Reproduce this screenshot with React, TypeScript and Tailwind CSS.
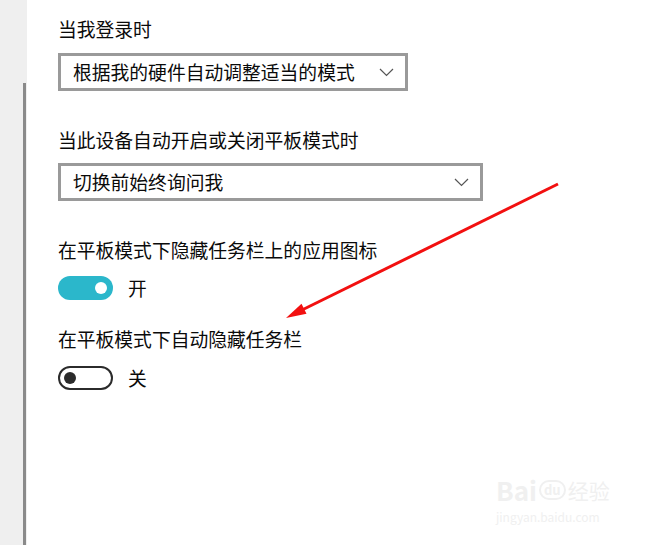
const FONT = { fontFamily: '"Microsoft YaHei", "Noto Sans CJK SC", "Noto Sans", sans-serif' };

function Chevron() {
  return (
    <svg width="15" height="9" viewBox="0 0 15 9" className="shrink-0">
      <path d="M1 1 L7.5 7.5 L14 1" fill="none" stroke="#555" strokeWidth="1.2" />
    </svg>
  );
}

function Select({ value, width }: { value: string; width: string }) {
  return (
    <div
      className={`flex h-[38px] items-center justify-between border-[3px] border-[#9a9a9a] bg-white pl-[12px] pr-[11px] ${width}`}
    >
      <span className="text-[18.8px] leading-none text-[#0a0a0a]">{value}</span>
      <Chevron />
    </div>
  );
}

function Toggle({ on, label }: { on: boolean; label: string }) {
  return (
    <div className="flex items-center gap-[15px]">
      {on ? (
        <div className="flex h-[24px] w-[55px] items-center justify-end rounded-full bg-[#2bb7cb] pr-[6px]">
          <div className="h-[12px] w-[12px] rounded-full bg-white" />
        </div>
      ) : (
        <div className="flex h-[24px] w-[55px] items-center rounded-full border-[2.5px] border-[#2b2b2b] bg-white pl-[4px]">
          <div className="h-[12px] w-[12px] rounded-full bg-[#2b2b2b]" />
        </div>
      )}
      <span className="text-[18.8px] leading-none text-[#0a0a0a]">{label}</span>
    </div>
  );
}

function Label({ children }: { children: string }) {
  return <div className="text-[18.8px] leading-[28px] text-[#0a0a0a]">{children}</div>;
}

export default function App() {
  return (
    <div className="relative flex h-[545px] w-[647px] overflow-hidden bg-white" style={FONT}>
      {/* left pane + scrollbar */}
      <div className="flex w-[27px] shrink-0 flex-col bg-[#efefef]">
        <div className="h-[83px]" />
        <div className="ml-[23px] w-[3px] flex-1 bg-[#8a8a8a]" />
      </div>

      <div className="flex flex-1 flex-col pl-[31px] pt-[15px]">
        <Label>当我登录时</Label>
        <div className="mt-[10px]">
          <Select value="根据我的硬件自动调整适当的模式" width="w-[350px]" />
        </div>

        <div className="mt-[35px]">
          <Label>当此设备自动开启或关闭平板模式时</Label>
        </div>
        <div className="mt-[9px]">
          <Select value="切换前始终询问我" width="w-[425px]" />
        </div>

        <div className="mt-[35px]">
          <Label>在平板模式下隐藏任务栏上的应用图标</Label>
        </div>
        <div className="mt-[12px]">
          <Toggle on label="开" />
        </div>

        <div className="mt-[25px]">
          <Label>在平板模式下自动隐藏任务栏</Label>
        </div>
        <div className="mt-[13px]">
          <Toggle on={false} label="关" />
        </div>
      </div>

      {/* annotation arrow */}
      <svg className="pointer-events-none absolute left-0 top-0" width="647" height="545">
        <line x1="558" y1="184" x2="302" y2="310" stroke="#f21010" strokeWidth="3" />
        <polygon points="286,318 306.5,313.8 301.5,303.8" fill="#f21010" />
      </svg>

      {/* watermark */}
      <div className="pointer-events-none absolute left-[496px] top-[478px] flex flex-col items-start gap-[8px] text-[#f0f0f0]">
        <div className="flex h-[24px] items-center gap-[2px]">
          <span className="text-[26px] font-bold leading-[24px]">Bai</span>
          <span className="rounded-full border-2 border-[#f0f0f0] px-[3px] text-[13px] font-bold leading-[16px]">du</span>
          <span className="text-[21px] leading-[24px]">经验</span>
        </div>
        <span className="text-[12px] leading-[13px]">jingyan.baidu.com</span>
      </div>
    </div>
  );
}
